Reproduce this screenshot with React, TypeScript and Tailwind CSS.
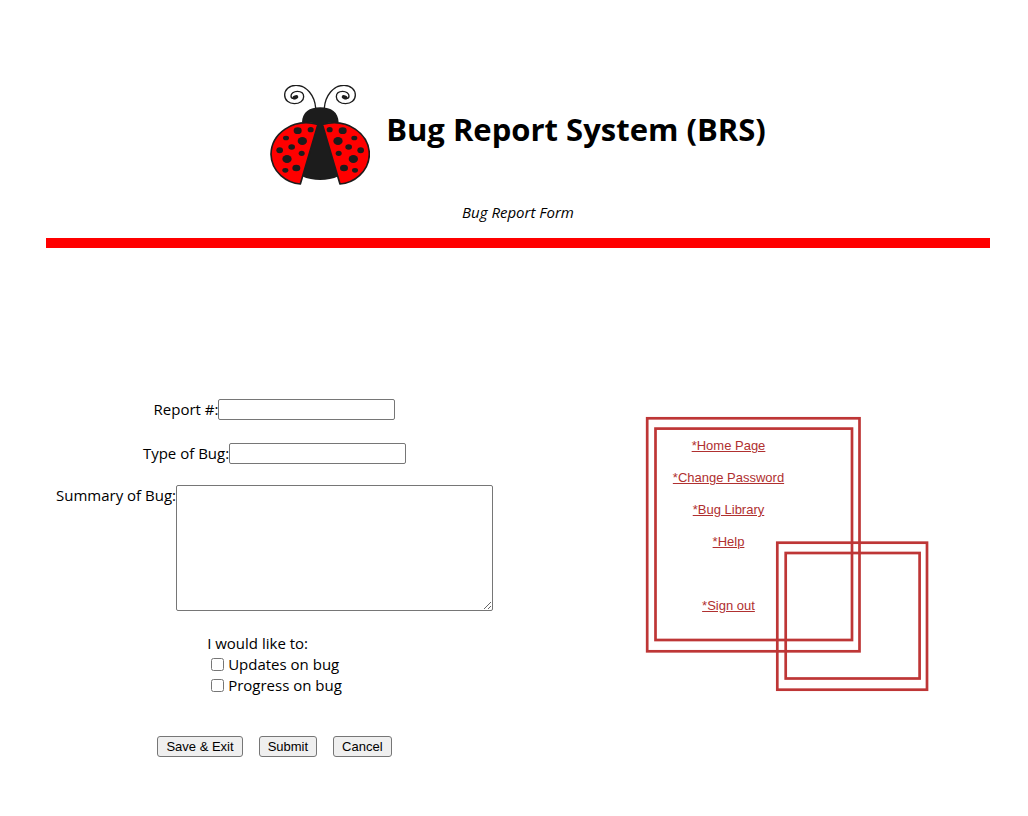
const spots = [
  [113, 167, 12, 10],
  [152, 164, 9, 8],
  [78, 189, 9, 7],
  [127, 198, 14, 12],
  [95, 216, 10, 8],
  [59, 226, 10, 9],
  [125, 235, 9, 8],
  [81, 252, 14, 12],
  [109, 279, 12, 10],
  [76, 286, 9, 7],
];

function Wing() {
  return (
    <g>
      <path
        d="M174 148C98 128 34 176 33 238C34 292 82 325 121 327Z"
        fill="#ff0000"
        stroke="#1c1c1c"
        strokeWidth="5"
        strokeLinejoin="round"
      />
      {spots.map(([cx, cy, rx, ry]) => (
        <ellipse key={`${cx}-${cy}`} cx={cx} cy={cy} rx={rx} ry={ry} fill="#1c1c1c" />
      ))}
    </g>
  );
}

function Antenna() {
  return (
    <g>
      <path
        d="M167 99C164 62 140 31 108 31C87 31 74 45 74 60C74 76 87 86 103 86C119 86 131 77 131 65C131 54 122 49 112 49C101 49 93 56 93 63C93 68 96 71 102 71"
        fill="none"
        stroke="#1c1c1c"
        strokeWidth="4"
        strokeLinecap="round"
      />
      <ellipse cx="106" cy="67" rx="9" ry="6" fill="#1c1c1c" transform="rotate(-20 106 67)" />
    </g>
  );
}

function Ladybug() {
  return (
    <svg viewBox="30 30 300 300" className="size-[100px] shrink-0" role="img" aria-label="Ladybug">
      <Antenna />
      <g transform="matrix(-1 0 0 1 360 0)">
        <Antenna />
      </g>
      <path
        d="M126 142C127 112 148 97 181 97C214 97 235 112 236 142C205 142 196 145 181 151C166 145 157 142 126 142Z"
        fill="#1c1c1c"
      />
      <path d="M170 145H191L235 304C204 319 158 319 126 304Z" fill="#1c1c1c" />
      <Wing />
      <g transform="matrix(-1 0 0 1 361 0)">
        <Wing />
      </g>
    </svg>
  );
}

function Frames() {
  return (
    <svg
      viewBox="0 0 285 276"
      className="pointer-events-none absolute top-0 left-0 h-[276px] w-[285px]"
      fill="none"
      stroke="#be3636"
      strokeWidth="2.7"
      aria-hidden="true"
    >
      <rect x="2.2" y="2.3" width="212.3" height="233" />
      <rect x="10.5" y="12.6" width="196.5" height="211.4" />
      <rect x="132.3" y="126.7" width="149.7" height="147" />
      <rect x="140.7" y="137" width="133.9" height="125.5" />
    </svg>
  );
}

const field = "border border-[#767676] rounded-xs bg-white px-1 text-[13px] text-black";
const button =
  "h-[21px] rounded-[3px] border border-[#767676] bg-[#efefef] px-2 font-['Liberation_Sans',Arial,sans-serif] text-[13px] leading-4 font-normal text-black";
const link = "text-[#b03030] underline";

export default function App() {
  return (
    <div className="min-h-screen bg-white pt-[85px] pr-[38px] pb-14 pl-[46px] font-['Open_Sans','Noto_Sans',sans-serif] text-[15px] leading-[21px] text-black">
      <header className="border-b-10 border-[#ff0000] pb-[15px] text-center">
        <div className="flex items-start justify-center gap-4">
          <Ladybug />
          <h1 className="pt-[23px] text-[31px] leading-[42px] font-bold">Bug Report System (BRS)</h1>
        </div>
        <p className="mt-[17px] italic">Bug Report Form</p>
      </header>

      <main className="mt-[151px] grid grid-cols-[457fr_487fr]">
        <form className="flex flex-col items-center" onSubmit={(e) => e.preventDefault()}>
          <div className="flex items-center">
            <label htmlFor="report">Report #:</label>
            <input id="report" type="text" className={`${field} h-[21px] w-[177px]`} />
          </div>
          <div className="mt-[23px] flex items-center">
            <label htmlFor="type">Type of Bug:</label>
            <input id="type" type="text" className={`${field} h-[21px] w-[177px]`} />
          </div>
          <div className="mt-[21px] flex items-start">
            <label htmlFor="summary">Summary of Bug:</label>
            <textarea id="summary" className={`${field} h-[126px] w-[317px] resize`} />
          </div>
          <fieldset className="mt-[22px]">
            <legend>I would like to:</legend>
            <label className="flex items-center">
              <input type="checkbox" className="mr-1 ml-1 size-[13px]" />
              Updates on bug
            </label>
            <label className="flex items-center">
              <input type="checkbox" className="mr-1 ml-1 size-[13px]" />
              Progress on bug
            </label>
          </fieldset>
          <div className="mt-10 flex gap-4">
            <button type="button" className={button}>Save &amp; Exit</button>
            <button type="submit" className={button}>Submit</button>
            <button type="button" className={button}>Cancel</button>
          </div>
        </form>

        <div className="pt-[17px] pl-[142px]">
          <div className="relative h-[276px] w-[285px]">
            <Frames />
            <nav className="relative flex w-[167px] flex-col items-center gap-4 pt-[22px] font-['Liberation_Sans',Arial,sans-serif] text-[13px] leading-4">
              <a href="#home" className={link}>*Home Page</a>
              <a href="#password" className={link}>*Change Password</a>
              <a href="#library" className={link}>*Bug Library</a>
              <a href="#help" className={link}>*Help</a>
              <a href="#signout" className={`${link} mt-8`}>*Sign out</a>
            </nav>
          </div>
        </div>
      </main>
    </div>
  );
}
